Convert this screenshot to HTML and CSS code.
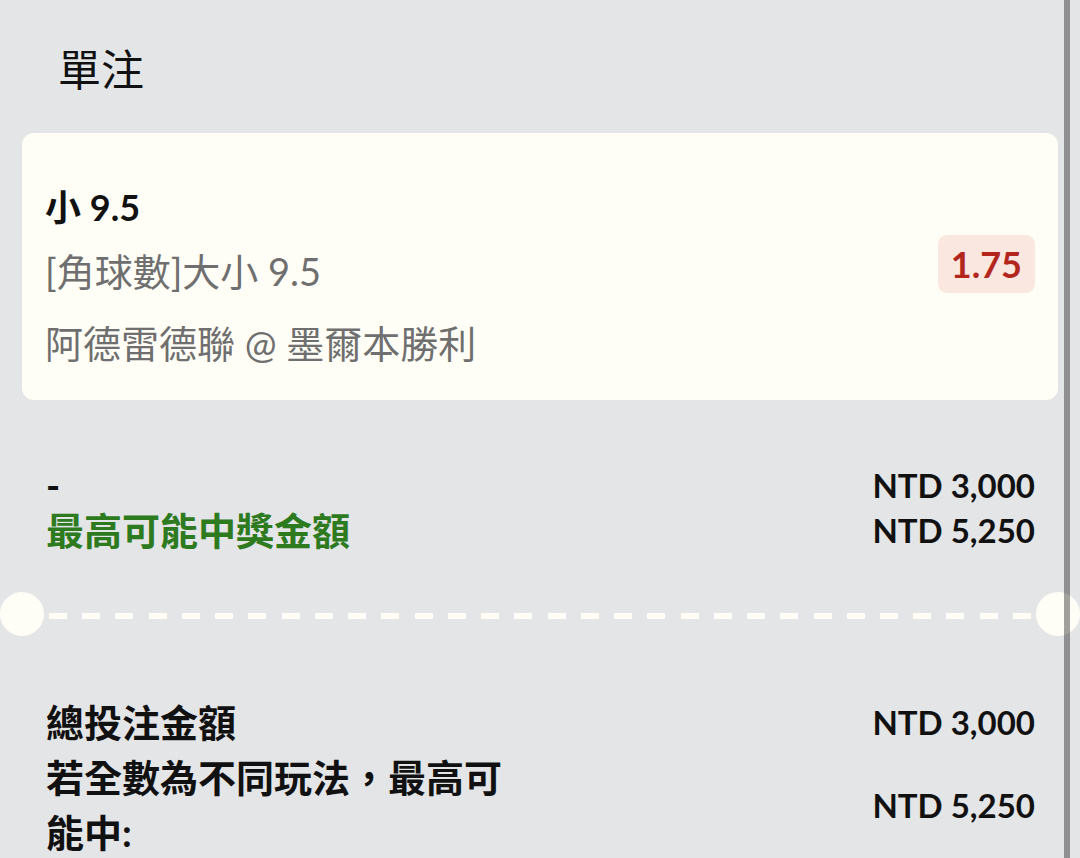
FILE: index.html
```html
<!DOCTYPE html>
<html lang="zh-Hant">
<head>
    <meta charset="UTF-8">
    <title>單注</title>
    <link rel="stylesheet" href="styles.css">
</head>
<body>
<div class="screen">
    <!--標題-->
    <h1 class="title">單注</h1>

    <!--投注選項卡片-->
    <div class="card">
        <div class="sel">
            <div class="pick">小 9.5</div>
            <div class="market">[角球數]大小 9.5</div>
            <div class="match">阿德雷德聯 @ 墨爾本勝利</div>
        </div>
        <span class="odds">1.75</span>
    </div>

    <!--本注金額-->
    <div class="stake">
        <div class="row">
            <span class="dash-label">-</span>
            <span class="amt">NTD 3,000</span>
        </div>
        <div class="row">
            <span class="win">最高可能中獎金額</span>
            <span class="amt">NTD 5,250</span>
        </div>
    </div>

    <!--票根虛線-->
    <div class="divider">
        <span class="notch"></span>
        <span class="line"></span>
        <span class="notch"></span>
    </div>

    <!--合計-->
    <div class="total">
        <div class="row">
            <span class="label">總投注金額</span>
            <span class="amt">NTD 3,000</span>
        </div>
        <div class="row">
            <span class="label">若全數為不同玩法，最高可能中:</span>
            <span class="amt">NTD 5,250</span>
        </div>
    </div>

    <div class="scrollbar"></div>
</div>
</body>
</html>
```

FILE: styles.css
```css
* {
    margin: 0;
    padding: 0;
    box-sizing: border-box;
}

body {
    background-color: #e4e5e7;
    font-family: Lato, "Noto Sans CJK TC", sans-serif;
    font-size: 38px;
    color: #111;
    overflow: hidden;
}

.screen {
    position: relative;
    width: 1080px;
    height: 858px;
}

/*標題*/
.title {
    font-size: 43px;
    font-weight: 400;
    line-height: 60px;
    padding: 40px 0 0 58px;
    margin-bottom: 33px;
}

/*卡片*/
.card {
    margin: 0 22px;
    padding: 50px 23px 25px 23px;
    background-color: #fffef6;
    border-radius: 12px;
    display: flex;
    align-items: center;
    justify-content: space-between;
}

.pick {
    font-size: 36px;
    font-weight: 700;
    line-height: 48px;
}

.market,
.match {
    color: #6f6f6f;
    line-height: 64px;
    margin-top: 8px;
}

.odds {
    background-color: #f9e7e0;
    color: #b3261e;
    font-weight: 700;
    font-size: 36px;
    line-height: 58px;
    padding: 0 13px;
    border-radius: 9px;
    margin-bottom: 30px;
}

/*金額列*/
.row {
    display: flex;
    align-items: center;
    justify-content: space-between;
    font-weight: 700;
}

.amt {
    font-size: 33px;
}

.stake {
    margin-top: 63px;
    padding: 0 45px 0 46px;
}

.stake .row {
    line-height: 45px;
}

.win {
    color: #2e7a1f;
}

/*虛線與缺口*/
.divider {
    margin-top: 39px;
    display: flex;
    align-items: center;
}

.notch {
    width: 44px;
    height: 44px;
    border-radius: 50%;
    background-color: #fffef6;
}

.line {
    flex: 1;
    height: 6px;
    margin: 4px 5px 0 5px;
    background: repeating-linear-gradient(to right, #fffef6 0 18px, transparent 18px 33.24px);
}

.total {
    margin-top: 59px;
    padding: 0 45px 0 46px;
}

.total .row {
    line-height: 55px;
}

.total .label {
    width: 470px;
}

/*右側捲軸*/
.scrollbar {
    position: absolute;
    top: 0;
    left: 1064px;
    width: 6px;
    height: 100%;
    background-color: rgba(0, 0, 0, 0.37);
}
```
